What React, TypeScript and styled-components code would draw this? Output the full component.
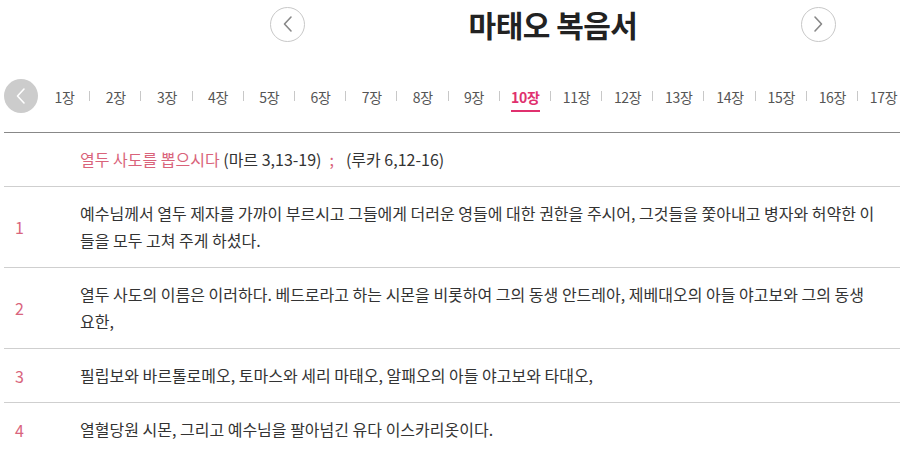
import styled, { createGlobalStyle } from 'styled-components';

const GlobalStyle = createGlobalStyle`
  html, body {
    margin: 0;
    padding: 0;
    background: #fff;
  }
  body {
    font-family: 'Noto Sans CJK KR', 'Noto Sans', sans-serif;
    color: #333;
  }
`;

const chapters = Array.from({ length: 28 }, (_, i) => i + 1);
const currentChapter = 10;

const verses = [
  {
    no: 1,
    text: '예수님께서 열두 제자를 가까이 부르시고 그들에게 더러운 영들에 대한 권한을 주시어, 그것들을 쫓아내고 병자와 허약한 이들을 모두 고쳐 주게 하셨다.',
  },
  {
    no: 2,
    text: '열두 사도의 이름은 이러하다. 베드로라고 하는 시몬을 비롯하여 그의 동생 안드레아, 제베대오의 아들 야고보와 그의 동생 요한,',
  },
  {
    no: 3,
    text: '필립보와 바르톨로메오, 토마스와 세리 마태오, 알패오의 아들 야고보와 타대오,',
  },
  {
    no: 4,
    text: '열혈당원 시몬, 그리고 예수님을 팔아넘긴 유다 이스카리옷이다.',
  },
];

function Chevron({ dir, color }: { dir: 'left' | 'right'; color: string }) {
  return (
    <svg width="14" height="18" viewBox="0 0 14 18" fill="none">
      <path
        d={dir === 'left' ? 'M10 2 L3.5 9 L10 16' : 'M4 2 L10.5 9 L4 16'}
        stroke={color}
        strokeWidth="1.6"
        strokeLinecap="round"
        strokeLinejoin="round"
      />
    </svg>
  );
}

export default function App() {
  return (
    <Page>
      <GlobalStyle />
      <Header>
        <RoundButton aria-label="이전 책">
          <Chevron dir="left" color="#888" />
        </RoundButton>
        <Title>마태오 복음서</Title>
        <RoundButton aria-label="다음 책">
          <Chevron dir="right" color="#888" />
        </RoundButton>
      </Header>

      <ChapterBar>
        <PrevChapter aria-label="이전 장">
          <Chevron dir="left" color="#fff" />
        </PrevChapter>
        <Tabs>
          {chapters.map((c) => (
            <Tab key={c} active={c === currentChapter}>
              <TabLabel active={c === currentChapter}>{c}장</TabLabel>
            </Tab>
          ))}
        </Tabs>
      </ChapterBar>

      <Table>
        <HeadingRow>
          <NumberCell />
          <TextCell>
            <Pink>열두 사도를 뽑으시다</Pink> (마르 3,13-19)
            <Semi>;</Semi>(루카 6,12-16)
          </TextCell>
        </HeadingRow>
        {verses.map((v) => (
          <VerseRow key={v.no}>
            <NumberCell>{v.no}</NumberCell>
            <TextCell>{v.text}</TextCell>
          </VerseRow>
        ))}
      </Table>
    </Page>
  );
}

const Page = styled.div`
  width: 900px;
  height: 450px;
  overflow: hidden;
  padding-left: 4px;
  box-sizing: border-box;
`;

const Header = styled.div`
  display: flex;
  align-items: center;
  justify-content: space-between;
  width: 566px;
  height: 48px;
  margin-left: 266px;
`;

const RoundButton = styled.button`
  width: 35px;
  height: 35px;
  border-radius: 50%;
  border: 1px solid #c8c8c8;
  background: #fff;
  display: flex;
  align-items: center;
  justify-content: center;
  padding: 0;
  cursor: pointer;
`;

const Title = styled.h1`
  margin: 0;
  font-size: 30px;
  font-weight: 700;
  color: #222;
  letter-spacing: -0.5px;
`;

const ChapterBar = styled.div`
  display: flex;
  align-items: center;
  height: 36px;
  margin-top: 30px;
`;

const PrevChapter = styled.button`
  flex: 0 0 34px;
  width: 34px;
  height: 34px;
  border-radius: 50%;
  border: none;
  background: #cccccc;
  display: flex;
  align-items: center;
  justify-content: center;
  padding: 0;
  cursor: pointer;
`;

const Tabs = styled.div`
  display: flex;
  align-items: center;
  margin-left: 1px;
`;

const Tab = styled.div<{ active: boolean }>`
  position: relative;
  flex: 0 0 51.2px;
  display: flex;
  justify-content: center;
  font-size: 14px;
  color: ${(p) => (p.active ? '#e0306e' : '#555')};
  font-weight: ${(p) => (p.active ? 700 : 400)};

  &:not(:last-child)::after {
    content: '';
    position: absolute;
    right: 0;
    top: 50%;
    width: 1px;
    height: 10px;
    margin-top: -5px;
    background: #c8c8c8;
  }
`;

const TabLabel = styled.span<{ active: boolean }>`
  padding: 6px 0 3px;
  border-bottom: 2px solid ${(p) => (p.active ? '#e0306e' : 'transparent')};
  letter-spacing: -0.3px;
`;

const Table = styled.div`
  margin-top: 18px;
  border-top: 1px solid #888;
`;

const Row = styled.div`
  display: flex;
  align-items: center;
  border-bottom: 1px solid #cfcfcf;
`;

const HeadingRow = styled(Row)`
  height: 53px;
`;

const VerseRow = styled(Row)`
  padding: 13px 0;
`;

const NumberCell = styled.div`
  flex: 0 0 65px;
  padding-left: 11px;
  font-size: 16px;
  color: #d9657d;
`;

const TextCell = styled.div`
  flex: 0 0 797px;
  font-size: 16px;
  line-height: 27px;
  color: #333;
`;

const Pink = styled.span`
  color: #d9637a;
`;

const Semi = styled.span`
  color: #d9637a;
  margin: 0 12px 0 8px;
`;
